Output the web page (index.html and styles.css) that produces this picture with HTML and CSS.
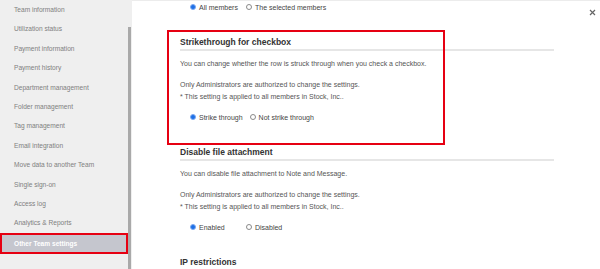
FILE: index.html
```html
<!DOCTYPE html>
<html lang="en">
<head>
  <meta charset="UTF-8">
  <meta name="viewport" content="width=device-width, initial-scale=1.0">
  <title>Team settings</title>
  <link rel="stylesheet" href="styles.css">
</head>
<body>
  <div class="layout">
    <!-- Sidebar -->
    <aside class="sidebar">
      <ul class="nav">
        <li class="nav-item">Team information</li>
        <li class="nav-item">Utilization status</li>
        <li class="nav-item">Payment information</li>
        <li class="nav-item">Payment history</li>
        <li class="nav-item">Department management</li>
        <li class="nav-item">Folder management</li>
        <li class="nav-item">Tag management</li>
        <li class="nav-item">Email integration</li>
        <li class="nav-item">Move data to another Team</li>
        <li class="nav-item">Single sign-on</li>
        <li class="nav-item">Access log</li>
        <li class="nav-item">Analytics &amp; Reports</li>
        <li class="nav-item active">Other Team settings</li>
      </ul>
      <div class="scroll-track"><div class="scroll-thumb"></div></div>
    </aside>

    <!-- Settings content -->
    <main class="content">
      <span class="close-btn">
        <svg width="7" height="7" viewBox="0 0 7 7"><path d="M1 1L6 6M6 1L1 6" stroke="#666" stroke-width="1.2" fill="none"/></svg>
      </span>

      <div class="radio-row top-row">
        <label class="option wide"><span class="radio checked"></span>All members</label>
        <label class="option"><span class="radio"></span>The selected members</label>
      </div>

      <section class="setting marked">
        <h3 class="setting-title">Strikethrough for checkbox</h3>
        <p class="setting-desc">You can change whether the row is struck through when you check a checkbox.</p>
        <p class="setting-note">Only Administrators are authorized to change the settings.<br>* This setting is applied to all members in Stock, Inc..</p>
        <div class="radio-row">
          <label class="option"><span class="radio checked"></span>Strike through</label>
          <label class="option"><span class="radio"></span>Not strike through</label>
        </div>
      </section>

      <section class="setting">
        <h3 class="setting-title">Disable file attachment</h3>
        <p class="setting-desc">You can disable file attachment to Note and Message.</p>
        <p class="setting-note">Only Administrators are authorized to change the settings.<br>* This setting is applied to all members in Stock, Inc..</p>
        <div class="radio-row">
          <label class="option wide"><span class="radio checked"></span>Enabled</label>
          <label class="option"><span class="radio"></span>Disabled</label>
        </div>
      </section>

      <section class="setting">
        <h3 class="setting-title">IP restrictions</h3>
      </section>
    </main>
  </div>
</body>
</html>
```

FILE: styles.css
```css
body {
  font-family: "Liberation Sans", Arial, sans-serif;
  background-color: #fff;
  margin: 0;
  padding: 0;
  overflow: hidden;
}

.layout {
  display: flex;
  height: 269px;
}

/* Sidebar */
.sidebar {
  width: 132px;
  flex-shrink: 0;
  display: flex;
  background: #efefef;
}

.nav {
  list-style: none;
  margin: 0;
  padding: 0;
  width: 128px;
}

.nav-item {
  height: 19.4px;
  line-height: 19.4px;
  padding-left: 14px;
  font-size: 6.6px;
  color: #808080;
  white-space: nowrap;
}

.nav-item.active {
  margin: 2px 2px 0 2px;
  padding-left: 12px;
  height: 17px;
  line-height: 17px;
  background: #c5c6ce;
  color: #fff;
  font-weight: bold;
  outline: 2px solid #e60012;
}

.scroll-track {
  width: 3px;
  margin-right: 1px;
}

.scroll-thumb {
  margin-top: 27px;
  height: 242px;
  background: #a9a9a9;
}

/* Content */
.content {
  position: relative;
  flex: 1;
  border-top: 1px solid #ececec;
  padding: 0 46px 0 48px;
}

.close-btn {
  position: absolute;
  top: 8px;
  right: 4px;
  line-height: 0;
}

.radio-row {
  display: flex;
  align-items: center;
  height: 12px;
  padding-left: 10px;
  margin-top: 8px;
}

.top-row {
  margin-top: 0;
  margin-bottom: 23px;
}

.option {
  display: flex;
  align-items: center;
  font-size: 7px;
  color: #444;
  margin-right: 7px;
}

.option.wide {
  min-width: 49px;
}

.radio {
  width: 4px;
  height: 4px;
  border-radius: 50%;
  border: 1px solid #8a8a8a;
  background: #fff;
  margin-right: 3px;
}

.radio.checked {
  background: #1d6fe6;
  border-color: #7eaaf0;
}

.setting {
  position: relative;
  margin-bottom: 23px;
}

.setting.marked::after {
  content: "";
  position: absolute;
  left: -13px;
  top: -6px;
  width: 278px;
  height: 115px;
  border: 2px solid #e60012;
  box-sizing: border-box;
}

.setting-title {
  margin: 0;
  font-size: 8.5px;
  line-height: 12px;
  color: #333;
  padding-bottom: 1px;
  border-bottom: 2px solid #e6e6e6;
}

.setting-desc {
  margin: 7px 0 0 0;
  font-size: 7px;
  line-height: 12px;
  color: #555;
}

.setting-note {
  margin: 9px 0 0 0;
  font-size: 7px;
  line-height: 12px;
  color: #555;
}
```
